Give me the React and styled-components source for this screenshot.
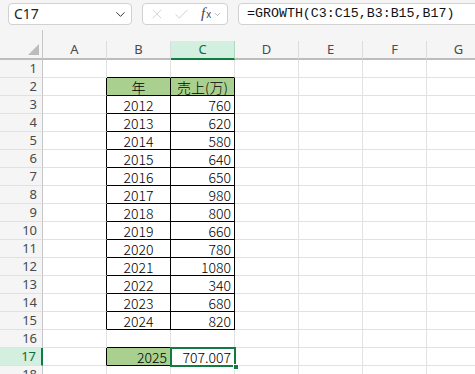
import styled, { createGlobalStyle } from "styled-components"
import { ChevronDown, X, Check } from "lucide-react"

const GlobalStyles = createGlobalStyle`
  html, body {
    margin: 0;
    padding: 0;
  }
  body {
    background: #f5f5f5;
    font-family: "Noto Sans", "Noto Sans CJK JP", sans-serif;
  }
`

const Ventana = styled.div`
  width: 475px;
  height: 374px;
  overflow: hidden;
  background: #f5f5f5;
`

const BarraFormula = styled.div`
  display: flex;
  align-items: flex-start;
  gap: 10px;
  height: 30px;
  padding: 3px 0 0 8px;
  box-sizing: border-box;
`

const Caja = styled.div`
  display: flex;
  align-items: center;
  flex-shrink: 0;
  height: 22px;
  box-sizing: border-box;
  background: #fff;
  border: 1px solid #d1d1d1;
  border-radius: 4px;
  line-height: 16px;
  width: ${p => p.$ancho}px;
`

const CuadroNombre = styled(Caja)`
  justify-content: space-between;
  padding: 0 3px 0 5px;
  font-size: 14px;
  color: #222;
`

const Botones = styled(Caja)`
  padding: 0 0 0 6px;
  gap: 8px;
  color: #c4c4c4;
`

const Fx = styled.span`
  display: flex;
  align-items: baseline;
  margin-left: 3px;
  font-family: "Liberation Serif", serif;
  font-style: italic;
  font-size: 15px;
  color: #444;
  & small {
    font-size: 10px;
    font-style: normal;
    font-family: "Liberation Sans", sans-serif;
    margin-left: 1px;
  }
`

const Formula = styled(Caja)`
  padding-left: 8px;
  font-family: "Liberation Mono", monospace;
  font-size: 13.3px;
  color: #111;
`

const Hoja = styled.div`
  display: grid;
  grid-template-columns: 43px repeat(7, 64px);
  grid-template-rows: 11px 19px repeat(18, 18px);
`

const Esquina = styled.div`
  grid-row: 1 / span 2;
  position: relative;
  border-right: 1px solid #c6c6c6;
  border-bottom: 2px solid #bdbdbd;
  box-sizing: border-box;
  &::after {
    content: "";
    position: absolute;
    right: 3px;
    bottom: 3px;
    border-style: solid;
    border-width: 0 0 11px 11px;
    border-color: transparent transparent #bcbcbc transparent;
  }
`

const Hueco = styled.div``

const CabeceraColumna = styled.div`
  display: flex;
  align-items: center;
  justify-content: center;
  box-sizing: border-box;
  font-size: 13px;
  line-height: 15px;
  color: ${p => (p.$activa ? "#0e6b3a" : "#4a4a4a")};
  background: ${p => (p.$activa ? "#d3efe0" : "transparent")};
  border-right: 1px solid ${p => (p.$activa ? "#a9dcbf" : "#dcdcdc")};
  border-bottom: 2px solid ${p => (p.$activa ? "#107c41" : "#bdbdbd")};
`

const CabeceraFila = styled.div`
  display: flex;
  align-items: center;
  justify-content: flex-end;
  padding-right: 5px;
  box-sizing: border-box;
  font-size: 13px;
  line-height: 15px;
  color: ${p => (p.$activa ? "#0e6b3a" : "#4a4a4a")};
  background: ${p => (p.$activa ? "#d3efe0" : "transparent")};
  border-right: ${p => (p.$activa ? "2px solid #107c41" : "1px solid #c6c6c6")};
  border-bottom: 1px solid #e1e1e1;
`

const Celda = styled.div`
  position: relative;
  z-index: ${p => (p.$seleccion ? 2 : 0)};
  display: flex;
  align-items: center;
  justify-content: ${p => p.$alinear || "flex-end"};
  padding: 1px 3px 0;
  box-sizing: border-box;
  background: ${p => p.$fondo || "#fff"};
  border-right: 1px solid ${p => (p.$lineaDerecha ? "#000" : "#e1e1e1")};
  border-bottom: 1px solid ${p => (p.$lineaAbajo ? "#000" : "#e1e1e1")};
  font-family: "Noto Sans CJK JP", "Noto Sans", sans-serif;
  font-weight: 300;
  font-size: 14px;
  line-height: 15px;
  color: #000;
  white-space: nowrap;
`

const Seleccion = styled.div`
  position: absolute;
  top: -1px;
  left: -1px;
  right: -2px;
  bottom: -2px;
  border: 2px solid #107c41;
  pointer-events: none;
`

const Tirador = styled.div`
  position: absolute;
  right: -5px;
  bottom: -5px;
  width: 6px;
  height: 6px;
  box-sizing: border-box;
  background: #107c41;
  border: 1px solid #fff;
`

const columnas = ["A", "B", "C", "D", "E", "F", "G"]

const ventas = [
  [2012, 760], [2013, 620], [2014, 580], [2015, 640], [2016, 650],
  [2017, 980], [2018, 800], [2019, 660], [2020, 780], [2021, 1080],
  [2022, 340], [2023, 680], [2024, 820],
]

// contenido de las celdas: clave "fila-col"
const celdas = { "2-1": { texto: "年", alinear: "center", fondo: "#a9d08e" }, "2-2": { texto: "売上(万)", alinear: "center", fondo: "#a9d08e" } }
ventas.forEach(([anio, venta], i) => {
  celdas[`${i + 3}-1`] = { texto: anio, alinear: "center" }
  celdas[`${i + 3}-2`] = { texto: venta }
})
celdas["17-1"] = { texto: 2025, fondo: "#a9d08e" }
celdas["17-2"] = { texto: "707.007", seleccion: true }

const enTabla = (fila, col) =>
  (fila >= 2 && fila <= 15 && (col === 1 || col === 2)) || (fila === 17 && (col === 1 || col === 2))

const App = () => {
  const filas = Array.from({ length: 18 }, (_, i) => i + 1)

  return (
    <>
      <GlobalStyles />
      <Ventana>
        <BarraFormula>
          <CuadroNombre $ancho={124}>
            C17
            <ChevronDown size={15} strokeWidth={1.6} color="#333" />
          </CuadroNombre>
          <Botones $ancho={86}>
            <X size={16} strokeWidth={1.1} />
            <Check size={17} strokeWidth={1.1} />
            <Fx>f<small>x</small></Fx>
            <ChevronDown size={9} strokeWidth={1.5} color="#888" style={{ marginLeft: -6 }} />
          </Botones>
          <Formula $ancho={260}>=GROWTH(C3:C15,B3:B15,B17)</Formula>
        </BarraFormula>

        <Hoja>
          <Esquina />
          {columnas.map(c => <Hueco key={"h" + c} />)}
          {columnas.map(c => (
            <CabeceraColumna key={c} $activa={c === "C"}>{c}</CabeceraColumna>
          ))}
          {filas.map(fila => (
            <Fila key={fila} fila={fila} />
          ))}
        </Hoja>
      </Ventana>
    </>
  )
}

const Fila = ({ fila }) => (
  <>
    <CabeceraFila $activa={fila === 17}>{fila}</CabeceraFila>
    {columnas.map((_, col) => {
      const dato = celdas[`${fila}-${col}`]
      const lineaDerecha = enTabla(fila, col) || enTabla(fila, col + 1)
      const lineaAbajo = enTabla(fila, col) || enTabla(fila + 1, col)
      return (
        <Celda
          key={col}
          $fondo={dato?.fondo}
          $alinear={dato?.alinear}
          $seleccion={dato?.seleccion}
          $lineaDerecha={lineaDerecha}
          $lineaAbajo={lineaAbajo}
        >
          {dato?.texto}
          {dato?.seleccion && (
            <Seleccion>
              <Tirador />
            </Seleccion>
          )}
        </Celda>
      )
    })}
  </>
)

export default App
